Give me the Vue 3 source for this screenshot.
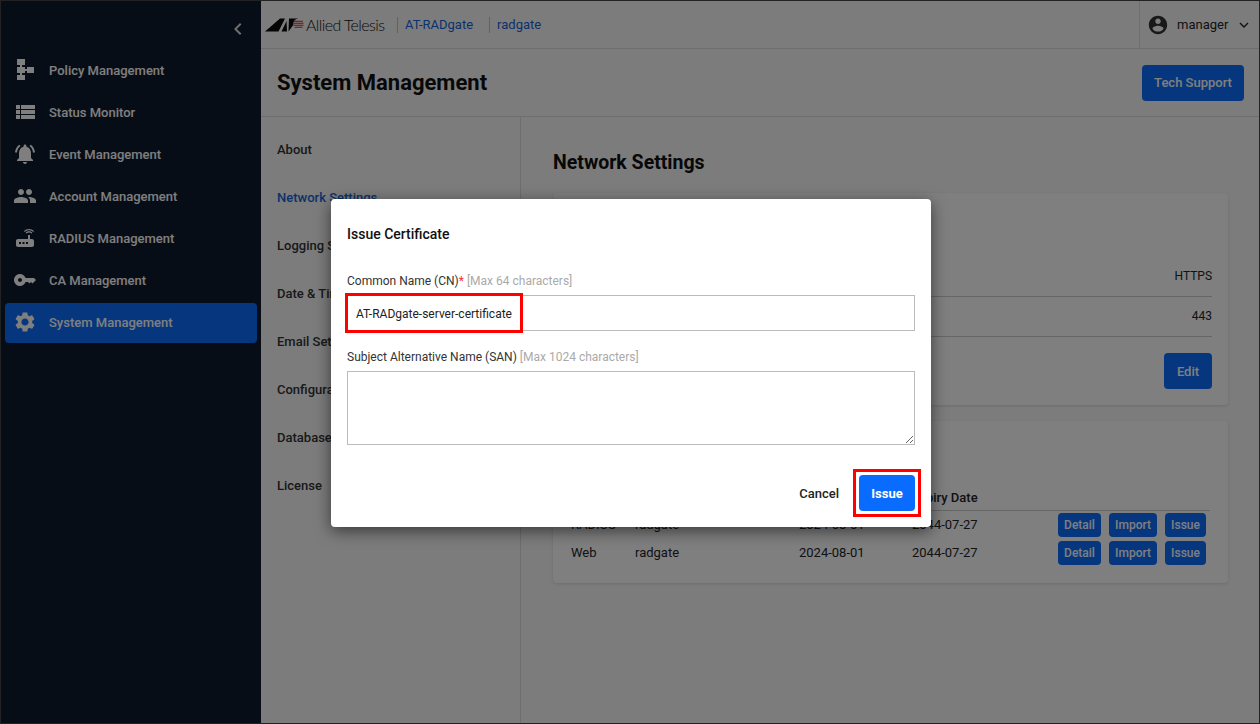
<script setup>
const menu = [
  { label: 'Policy Management', d: 'M4 1h8v6H9v2h3v2h2V9h7v6h-7v-2h-2v2H9v2h3v5H4v-5h3v-2H4V9h3V7H4z' },
  { label: 'Status Monitor', d: 'M3 5h4v4H3zM8 5h14v4H8zM3 10h4v4H3zM8 10h14v4H8zM3 15h4v4H3zM8 15h14v4H8z' },
  { label: 'Event Management', d: 'M7.580 4.080L6.150 2.650C3.750 4.480 2.170 7.300 2.030 10.500h2c.15-2.650 1.510-4.970 3.550-6.420zm12.390 6.420h2c-.15-3.200-1.730-6.020-4.120-7.850l-1.420 1.430c2.020 1.450 3.390 3.770 3.540 6.420zM18 11c0-3.070-1.640-5.640-4.500-6.320V4c0-.83-.67-1.500-1.500-1.500s-1.500.67-1.500 1.500v.68C7.630 5.360 6 7.920 6 11v5l-2 2v1h16v-1l-2-2v-5zm-6 11c.14 0 .27-.01.4-.04.65-.14 1.180-.58 1.440-1.180.1-.24.15-.5.15-.78h-4c.01 1.100.9 2 2.010 2z' },
  { label: 'Account Management', d: 'M16 11c1.660 0 2.990-1.340 2.990-3S17.660 5 16 5c-1.660 0-3 1.340-3 3s1.340 3 3 3zm-8 0c1.660 0 2.990-1.340 2.990-3S9.660 5 8 5C6.340 5 5 6.340 5 8s1.340 3 3 3zm0 2c-2.330 0-7 1.170-7 3.500V19h14v-2.500c0-2.330-4.670-3.500-7-3.500zm8 0c-.29 0-.62.02-.97.05 1.160.84 1.970 1.970 1.970 3.450V19h6v-2.500c0-2.330-4.670-3.500-7-3.500z' },
  { label: 'RADIUS Management', d: 'M20.200 5.900l.8-.8C19.600 3.700 17.800 3 16 3s-3.600.7-5 2.100l.8.8C13 4.800 14.500 4.200 16 4.200s3 .6 4.200 1.700zm-.9.8c-.9-.9-2.100-1.400-3.300-1.400s-2.400.5-3.300 1.400l.8.8c.7-.7 1.600-1 2.500-1 .9 0 1.800.3 2.500 1l.8-.8zM19 13h-2V9h-2v4H5c-1.100 0-2 .9-2 2v4c0 1.100.9 2 2 2h14c1.100 0 2-.9 2-2v-4c0-1.100-.9-2-2-2zM8 18H6v-2h2v2zm3.500 0h-2v-2h2v2zm3.500 0h-2v-2h2v2z' },
  { label: 'CA Management', d: 'M12.650 10C11.830 7.670 9.610 6 7 6c-3.310 0-6 2.690-6 6s2.690 6 6 6c2.610 0 4.830-1.670 5.650-4H15l1.500 1.500L18 14l1.500 1.500L21 14l2-2-2-2H12.650zM7 14c-1.100 0-2-.9-2-2s.9-2 2-2 2 .9 2 2-.9 2-2 2z' },
  { label: 'System Management', active: true, d: 'M19.140 12.940c.04-.3.06-.61.06-.94 0-.32-.02-.64-.07-.94l2.030-1.580c.18-.14.23-.41.12-.61l-1.920-3.320c-.12-.22-.37-.29-.59-.22l-2.390.96c-.5-.38-1.030-.7-1.620-.94l-.36-2.540c-.04-.24-.24-.41-.48-.41h-3.840c-.24 0-.43.17-.47.41l-.36 2.540c-.59.24-1.130.57-1.620.94l-2.390-.96c-.22-.08-.47 0-.59.22L2.740 8.870c-.12.21-.08.47.12.61l2.030 1.580c-.05.3-.09.63-.09.94s.02.64.07.94l-2.030 1.580c-.18.14-.23.41-.12.61l1.920 3.320c.12.22.37.29.59.22l2.390-.96c.5.38 1.030.7 1.620.94l.36 2.540c.05.24.24.41.48.41h3.840c.24 0 .44-.17.47-.41l.36-2.540c.59-.24 1.130-.56 1.620-.94l2.390.96c.22.08.47 0 .59-.22l1.920-3.320c.12-.22.07-.47-.12-.61l-2.010-1.580zM12 15.600c-1.980 0-3.600-1.620-3.600-3.600s1.620-3.600 3.600-3.600 3.600 1.620 3.600 3.600-1.620 3.600-3.600 3.600z' }
]
const sections = [
  { label: 'About' },
  { label: 'Network Settings', active: true },
  { label: 'Logging Settings' },
  { label: 'Date & Time' },
  { label: 'Email Settings' },
  { label: 'Configuration' },
  { label: 'Database' },
  { label: 'License' }
]
const certs = [
  { type: 'RADIUS', name: 'radgate', issued: '2024-08-01', expiry: '2044-07-27' },
  { type: 'Web', name: 'radgate', issued: '2024-08-01', expiry: '2044-07-27' }
]
</script>

<template>
  <div class="app">
    <aside class="sidebar">
      <div class="collapse">
        <svg width="24" height="24" viewBox="0 0 24 24"><path d="M15.400 7.400L14 6l-6 6 6 6 1.400-1.400L10.800 12z" fill="currentColor" /></svg>
      </div>
      <nav class="menu">
        <a v-for="m in menu" :key="m.label" class="menu-item" :class="{ active: m.active }">
          <svg class="menu-icon" width="24" height="24" viewBox="0 0 24 24"><path :d="m.d" fill="currentColor" /></svg>
          <span>{{ m.label }}</span>
        </a>
      </nav>
    </aside>

    <div class="content">
      <header class="topbar">
        <div class="logo">
          <svg width="40" height="14" viewBox="0 0 40 14">
            <path d="M0 13.500L15 .5h5L13.500 13.500zM16.500 13.500L21.500 3 22 13.500zM23.500 13.500L24 .5h9z" fill="#0b0b0b" />
            <circle cx="33.500" cy="5.800" r="5.200" fill="#fff" />
            <path d="M29 3.300h9M28.500 5.300h10M28.500 7.300h10M29.500 9.300h8" stroke="#d4202a" stroke-width="1.100" />
          </svg>
          <span class="logo-text">Allied Telesis</span>
        </div>
        <a class="crumb">AT-RADgate</a>
        <a class="crumb">radgate</a>
        <div class="user">
          <svg width="22" height="22" viewBox="0 0 24 24"><path d="M12 2C6.480 2 2 6.480 2 12s4.480 10 10 10 10-4.480 10-10S17.520 2 12 2zm0 3c1.660 0 3 1.340 3 3s-1.340 3-3 3-3-1.340-3-3 1.340-3 3-3zm0 14.200c-2.500 0-4.710-1.280-6-3.220.03-1.990 4-3.080 6-3.080 1.990 0 5.970 1.090 6 3.080-1.290 1.940-3.500 3.220-6 3.220z" fill="#333" /></svg>
          <span class="user-name">manager</span>
          <svg class="user-caret" width="10" height="6" viewBox="0 0 10 6"><path d="M1 1l4 4 4-4" fill="none" stroke="#222" stroke-width="1.400" /></svg>
        </div>
      </header>

      <div class="titlebar">
        <h1>System Management</h1>
        <button class="btn btn-lg">Tech Support</button>
      </div>

      <div class="body">
        <nav class="sections">
          <a v-for="s in sections" :key="s.label" class="section-link" :class="{ active: s.active }">{{ s.label }}</a>
        </nav>
        <main class="main">
          <h2>Network Settings</h2>
          <section class="card card-web">
            <div class="kv"><span>Protocol</span><span>HTTPS</span></div>
            <div class="kv"><span>Port</span><span>443</span></div>
            <div class="card-actions"><button class="btn btn-lg edit">Edit</button></div>
          </section>
          <section class="card card-certs">
            <div class="tr th">
              <span class="c1">Type</span><span class="c2">Name</span><span class="c3">Issue Date</span><span class="c4">Expiry Date</span>
            </div>
            <div v-for="c in certs" :key="c.type" class="tr">
              <span class="c1">{{ c.type }}</span>
              <span class="c2">{{ c.name }}</span>
              <span class="c3">{{ c.issued }}</span>
              <span class="c4">{{ c.expiry }}</span>
              <span class="acts">
                <button class="btn btn-sm b-detail">Detail</button>
                <button class="btn btn-sm b-import">Import</button>
                <button class="btn btn-sm b-issue">Issue</button>
              </span>
            </div>
          </section>
        </main>
      </div>
    </div>

    <div class="overlay">
      <div class="dialog">
        <div class="dialog-title">Issue Certificate</div>
        <label class="field-label">Common Name (CN)<em>*</em> <small>[Max 64 characters]</small></label>
        <div class="cn-wrap">
          <input class="input" type="text" value="AT-RADgate-server-certificate" />
          <span class="mark mark-cn"></span>
        </div>
        <label class="field-label second">Subject Alternative Name (SAN) <small>[Max 1024 characters]</small></label>
        <textarea class="textarea"></textarea>
        <div class="dialog-actions">
          <button class="btn-cancel">Cancel</button>
          <div class="issue-wrap">
            <button class="btn-issue">Issue</button>
            <span class="mark mark-issue"></span>
          </div>
        </div>
      </div>
    </div>
  </div>
</template>

<style>
html, body { margin: 0; padding: 0; }
</style>

<style scoped>
* { box-sizing: border-box; }
.app {
  position: relative;
  width: 1260px;
  height: 724px;
  overflow: hidden;
  display: flex;
  border: 1px solid #222;
  background: #f8f8f8;
  font-family: Roboto, "Liberation Sans", sans-serif;
  font-size: 13px;
  color: #212529;
}
.sidebar {
  width: 260px;
  flex: none;
  background: #0f1a2c;
  color: #fff;
  padding: 0 4px;
}
.collapse {
  height: 50px;
  display: flex;
  justify-content: flex-end;
  align-items: flex-start;
  padding: 16px 7px 0 0;
  color: #ddd;
}
.menu { display: flex; flex-direction: column; gap: 2px; }
.menu-item {
  height: 40px;
  display: flex;
  align-items: center;
  gap: 12px;
  padding: 0 0 2px 8px;
  border-radius: 4px;
  font-weight: 500;
  font-size: 13px;
}
.menu-item.active { background: #0d6efd; }
.menu-icon { flex: none; }
.content { flex: 1; min-width: 0; display: flex; flex-direction: column; }
.topbar {
  height: 48px;
  flex: none;
  display: flex;
  align-items: center;
  border-bottom: 1px solid #ddd;
  padding-left: 4px;
}
.logo { display: flex; align-items: center; width: 132px; gap: 1px; }
.logo-text {
  font-family: Lato, sans-serif;
  font-weight: 300;
  font-size: 16px;
  letter-spacing: -0.6px;
  color: #111;
  white-space: nowrap;
}
.crumb {
  height: 16px;
  line-height: 16px;
  padding-left: 7px;
  border-left: 1px solid #c4c4c4;
  margin-right: 8px;
  color: #1565d8;
}
.crumb + .crumb { margin-left: 8px; }
.user {
  margin-left: auto;
  width: 120px;
  height: 47px;
  border-left: 1px solid #ddd;
  display: flex;
  align-items: center;
  padding-left: 7px;
}
.user-name { margin-left: 8px; font-size: 13px; }
.user-caret { margin-left: 11px; }
.titlebar {
  height: 68px;
  flex: none;
  display: flex;
  align-items: center;
  justify-content: space-between;
  border-bottom: 1px solid #ddd;
  padding: 0 15px 0 16px;
}
h1 { margin: 0; font-size: 22px; font-weight: 700; color: #111; }
.btn {
  border: 0;
  background: #0d6efd;
  color: #fff;
  font-family: inherit;
  font-weight: 500;
  border-radius: 4px;
  padding: 0;
}
.btn-lg { height: 36px; width: 102px; font-size: 13px; }
.body { flex: 1; display: flex; min-height: 0; }
.sections {
  width: 260px;
  flex: none;
  border-right: 1px solid #ddd;
  padding: 9px 16px 0;
  display: flex;
  flex-direction: column;
}
.section-link { height: 48px; line-height: 48px; white-space: nowrap; font-weight: 500; font-size: 13px; color: #333; }
.section-link.active { color: #1565d8; }
.main { flex: 1; padding: 33px 31px 0 32px; min-width: 0; }
h2 { margin: 0 0 17px; font-size: 19.5px; line-height: 26px; font-weight: 700; color: #111; }
.card {
  background: #fff;
  border-radius: 4px;
  box-shadow: 0 1px 3px rgba(0, 0, 0, .12);
}
.card-web { height: 212px; padding: 64px 16px 0; margin-bottom: 16px; }
.kv {
  height: 40px;
  display: flex;
  justify-content: space-between;
  align-items: center;
  padding-bottom: 2px;
  font-size: 12px;
  border-bottom: 1px solid #ccc;
}
.card-actions { display: flex; justify-content: flex-end; margin-top: 16px; }
.edit { width: 48px; }
.card-certs { height: 162px; padding: 62px 18px 0; position: relative; }
.tr { height: 28px; display: flex; align-items: center; position: relative; }
.tr > span:not(.acts) { margin-bottom: 2px; }
.th { font-weight: 500; border-bottom: 1px solid #ccc; padding-top: 4px; }
.c1 { width: 64px; }
.c2 { width: 164px; }
.c3 { width: 113px; }
.c4 { width: 146px; }
.acts { display: flex; gap: 8px; }
.btn-sm { height: 24px; font-size: 12px; }
.b-detail { width: 43px; }
.b-import { width: 48px; }
.b-issue { width: 41px; }
.overlay {
  position: absolute;
  inset: 0;
  background: rgba(0, 0, 0, .5);
}
.dialog {
  position: absolute;
  left: 330px;
  top: 198px;
  width: 600px;
  height: 328px;
  background: #fff;
  border-radius: 4px;
  padding: 24px 16px 0;
  box-shadow: 0 4px 16px rgba(0, 0, 0, .55);
  display: flex;
  flex-direction: column;
}
.dialog-title { font-size: 14px; line-height: 22px; font-weight: 500; color: #111; margin-bottom: 27px; }
.field-label { display: block; font-size: 12px; line-height: 18px; color: #333; margin-bottom: 5px; }
.field-label em { color: #e33; font-style: normal; }
.field-label small { font-size: 12px; color: #aaa; }
.field-label.second { margin-top: 17px; }
.cn-wrap { position: relative; }
.input, .textarea {
  display: block;
  width: 568px;
  border: 1px solid #bbb;
  background: #fff;
  font-family: inherit;
  font-size: 12px;
  color: #222;
  outline: none;
  border-radius: 0;
}
.input { height: 36px; padding: 1px 8px 0; }
.textarea { height: 74px; padding: 6px 8px; }
.mark { position: absolute; border: 3px solid #f00; pointer-events: none; }
.mark-cn { left: -2px; top: -2px; width: 178px; height: 40px; }
.dialog-actions {
  display: flex;
  justify-content: flex-end;
  align-items: center;
  gap: 20px;
  margin-top: 30px;
}
.btn-cancel {
  border: 0;
  background: none;
  padding: 0;
  font-family: inherit;
  font-size: 13px;
  font-weight: 500;
  color: #222;
}
.issue-wrap { position: relative; }
.btn-issue {
  display: block;
  width: 56px;
  height: 36px;
  border: 0;
  border-radius: 4px;
  background: #0a6cff;
  color: #fff;
  font-family: inherit;
  font-size: 13px;
  font-weight: 700;
}
.mark-issue { left: -6px; top: -6px; width: 68px; height: 48px; }
</style>
